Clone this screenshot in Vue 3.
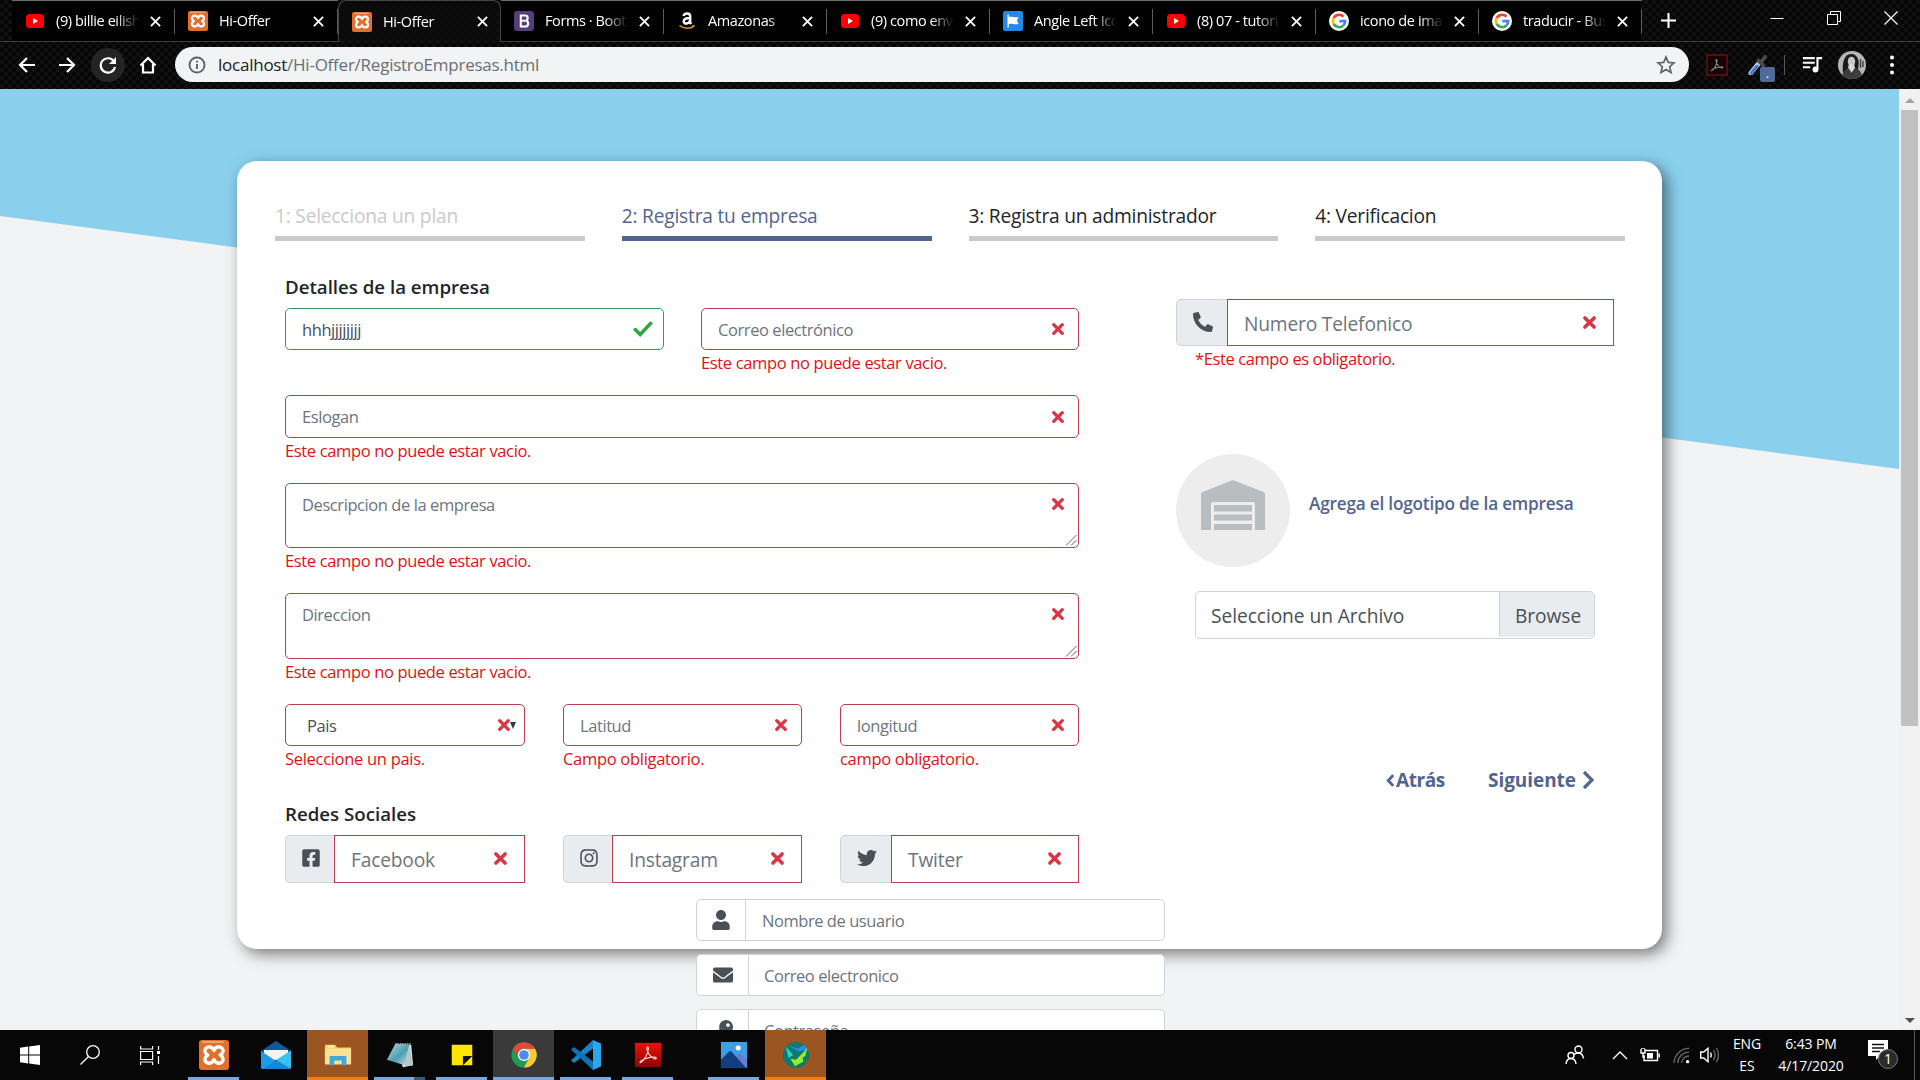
<script setup>
const tabs = [
  { icon: 'youtube', title: '(9) billie eilish' },
  { icon: 'xampp', title: 'Hi-Offer' },
  { icon: 'xampp', title: 'Hi-Offer', active: true },
  { icon: 'bootstrap', title: 'Forms · Bootstrap' },
  { icon: 'amazon', title: 'Amazonas' },
  { icon: 'youtube', title: '(9) como enviar' },
  { icon: 'flag', title: 'Angle Left Icon' },
  { icon: 'youtube', title: '(8) 07 - tutorial' },
  { icon: 'google', title: 'icono de imagen' },
  { icon: 'google', title: 'traducir - Buscar' },
]

const steps = [
  { label: '1: Selecciona un plan', state: 'done' },
  { label: '2: Registra tu empresa', state: 'current' },
  { label: '3: Registra un administrador', state: '' },
  { label: '4: Verificacion', state: '' },
]

const location = [
  { label: 'Pais', error: 'Seleccione un pais.', select: true },
  { label: 'Latitud', error: 'Campo obligatorio.' },
  { label: 'longitud', error: 'campo obligatorio.' },
]

const socials = [
  { icon: 'facebook', label: 'Facebook' },
  { icon: 'instagram', label: 'Instagram' },
  { icon: 'twitter', label: 'Twiter' },
]

const account = [
  { icon: 'user', label: 'Nombre de usuario' },
  { icon: 'envelope', label: 'Correo electronico' },
  { icon: 'key', label: 'Contraseña' },
]

const apps = [
  { icon: 'xampp', cls: 'running first' },
  { icon: 'mail', cls: '' },
  { icon: 'explorer', cls: 'alert' },
  { icon: 'notepad', cls: 'running stacked' },
  { icon: 'sticky', cls: 'running' },
  { icon: 'chrome', cls: 'focused' },
  { icon: 'vscode', cls: 'running' },
  { icon: 'acrobat', cls: 'running' },
  { icon: 'photos', cls: 'running spaced' },
  { icon: 'maps', cls: 'alert' },
]
</script>

<template>
  <div class="screen">
    <svg class="defs" aria-hidden="true">
      <linearGradient id="acroRed" x1="0" y1="0" x2="0" y2="1">
        <stop offset="0" stop-color="#ee1108" />
        <stop offset="1" stop-color="#8d0505" />
      </linearGradient>
      <linearGradient id="noteGlass" x1="0" y1="0" x2="1" y2="1">
        <stop offset="0" stop-color="#b5dce4" />
        <stop offset=".55" stop-color="#4d9fb0" />
        <stop offset="1" stop-color="#c9e0e4" />
      </linearGradient>
      <symbol id="youtube" viewBox="0 0 20 20" preserveAspectRatio="none">
        <rect x="1" y="3" width="18" height="14" rx="3.500" fill="#f00" />
        <path d="M8 7l5 3-5 3z" fill="#fff" />
      </symbol>
      <symbol id="xampp" viewBox="0 0 30 30">
        <rect width="30" height="30" rx="3" fill="#e2702b" />
        <rect x="3" y="1" width="22" height="2" rx="1" fill="#f6b98c" opacity=".7" />
        <path d="M15 10.500C13.500 6.500 9 6 7 8.200 5 10.500 6 13.500 8.800 15 6 16.500 5 20 7 22c2.200 2.200 6.700 1.300 8-2.500 1.300 3.800 5.800 4.700 8 2.500 2-2 1-5.500-1.800-7C24 13.500 25 10.500 23 8.200 21 6 16.500 6.500 15 10.500z" fill="none" stroke="#fff" stroke-width="3.400" stroke-linejoin="round" />
      </symbol>
      <symbol id="bootstrap" viewBox="0 0 20 20">
        <rect width="20" height="20" rx="3" fill="#563d7c" />
        <path d="M6.800 4.500h4.300c3.200 0 3.400 4.300.6 5.200 3.500.6 3.300 5.800-.6 5.800H6.800zM6.800 9.700h4.400" fill="none" stroke="#fff" stroke-width="2.100" />
      </symbol>
      <symbol id="amazon" viewBox="0 0 20 20">
        <path d="M6.500 5C7.500 1.600 13.200 1.600 13.200 5.300V11.500l1 1.500M13 7C9 7 6.600 8 6.700 10.500c.2 3 5.300 2.700 6.300-1" fill="none" stroke="#fff" stroke-width="2.400" />
        <path d="M2.500 14.500c4.500 3.700 10.500 3.700 14.500.6" fill="none" stroke="#e59520" stroke-width="1.500" />
        <path d="M14.800 14.200l3-.2-.9 2.600z" fill="#e59520" />
      </symbol>
      <symbol id="flag" viewBox="0 0 20 20">
        <rect width="20" height="20" rx="2" fill="#228ae6" />
        <path d="M4.500 3.500h1.300V6c3-1.200 5 1 9.800 0l-1.700 3.500L15.600 13c-4.500 1-7-1.200-9.800 0v3.500H4.500z" fill="#fff" />
      </symbol>
      <symbol id="google" viewBox="0 0 20 20">
        <circle cx="10" cy="10" r="10" fill="#fff" />
        <g fill="none" stroke-width="2.600">
          <path d="M14.600 5.700A6.200 6.200 0 0 0 4.700 7" stroke="#ea4335" />
          <path d="M4.700 7a6.200 6.200 0 0 0 0 6" stroke="#fbbc05" />
          <path d="M4.700 13a6.200 6.200 0 0 0 9.500 1.600" stroke="#34a853" />
          <path d="M14.200 14.600A6 6 0 0 0 16.200 10.100H10.300" stroke="#4285f4" />
        </g>
      </symbol>
      <symbol id="cross" viewBox="0 0 14 14">
        <path d="M2.700 2.700l8.600 8.600M11.300 2.700l-8.600 8.600" stroke="#d93546" stroke-width="3.300" stroke-linecap="round" />
      </symbol>
      <symbol id="phone" viewBox="0 0 512 512"><path d="M497.390 361.800l-112-48a24 24 0 0 0-28 6.900l-49.600 60.600A370.660 370.660 0 0 1 130.600 204.110l60.600-49.600a23.940 23.940 0 0 0 6.900-28l-48-112A24.160 24.160 0 0 0 122.600.61l-104 24A24 24 0 0 0 0 48c0 256.500 207.900 464 464 464a24 24 0 0 0 23.400-18.600l24-104a24.290 24.290 0 0 0-14.010-27.600z" /></symbol>
      <symbol id="facebook" viewBox="0 0 448 512"><path d="M400 32H48A48 48 0 0 0 0 80v352a48 48 0 0 0 48 48h137.250V327.690h-63V256h63v-54.640c0-62.150 37-96.480 93.670-96.480 27.140 0 55.520 4.840 55.520 4.840v61h-31.270c-30.810 0-40.420 19.120-40.420 38.730V256h68.780l-11 71.690h-57.780V480H400a48 48 0 0 0 48-48V80a48 48 0 0 0-48-48z" /></symbol>
      <symbol id="instagram" viewBox="0 0 448 512"><path d="M224.100 141c-63.600 0-114.900 51.300-114.900 114.900s51.300 114.900 114.900 114.900S339 319.500 339 255.900 287.700 141 224.100 141zm0 189.600c-41.100 0-74.700-33.500-74.700-74.700s33.500-74.700 74.700-74.700 74.700 33.500 74.700 74.700-33.600 74.700-74.700 74.700zm146.400-194.300c0 14.900-12 26.800-26.800 26.800-14.900 0-26.800-12-26.800-26.800s12-26.800 26.800-26.800 26.800 12 26.800 26.800zm76.100 27.200c-1.700-35.900-9.900-67.700-36.200-93.900-26.200-26.200-58-34.400-93.900-36.200-37-2.100-147.900-2.100-184.900 0-35.800 1.700-67.600 9.900-93.900 36.100s-34.400 58-36.200 93.900c-2.100 37-2.100 147.900 0 184.900 1.700 35.900 9.900 67.700 36.200 93.900s58 34.400 93.900 36.200c37 2.100 147.900 2.100 184.900 0 35.900-1.700 67.700-9.900 93.900-36.200 26.200-26.200 34.400-58 36.200-93.900 2.100-37 2.100-147.800 0-184.800zM398.800 388c-7.800 19.600-22.900 34.700-42.600 42.600-29.500 11.700-99.500 9-132.100 9s-102.700 2.600-132.100-9c-19.600-7.800-34.700-22.900-42.600-42.600-11.700-29.500-9-99.500-9-132.100s-2.600-102.700 9-132.100c7.800-19.600 22.900-34.700 42.600-42.600 29.500-11.700 99.500-9 132.100-9s102.700-2.600 132.100 9c19.600 7.800 34.700 22.900 42.600 42.600 11.700 29.500 9 99.500 9 132.100s2.700 102.700-9 132.100z" /></symbol>
      <symbol id="twitter" viewBox="0 0 512 512"><path d="M459.370 151.716c.325 4.548.325 9.097.325 13.645 0 138.720-105.583 298.558-298.558 298.558-59.452 0-114.680-17.219-161.137-47.106 8.447.974 16.568 1.299 25.340 1.299 49.055 0 94.213-16.568 130.274-44.832-46.132-.975-84.792-31.188-98.112-72.772 6.498.974 12.995 1.624 19.818 1.624 9.421 0 18.843-1.300 27.614-3.573-48.081-9.747-84.143-51.980-84.143-102.985v-1.299c13.969 7.797 30.214 12.670 47.431 13.319-28.264-18.843-46.781-51.005-46.781-87.391 0-19.492 5.197-37.360 14.294-52.954 51.655 63.675 129.300 105.258 216.365 109.807-1.624-7.797-2.599-15.918-2.599-24.040 0-57.828 46.782-104.934 104.934-104.934 30.213 0 57.502 12.670 76.670 33.137 23.715-4.548 46.456-13.320 66.599-25.340-7.798 24.366-24.366 44.833-46.132 57.827 21.117-2.273 41.584-8.122 60.426-16.243-14.292 20.791-32.161 39.308-52.628 54.253z" /></symbol>
      <symbol id="user" viewBox="0 0 448 512"><path d="M224 256c70.700 0 128-57.300 128-128S294.700 0 224 0 96 57.300 96 128s57.300 128 128 128zm89.600 32h-16.700c-22.200 10.200-46.900 16-72.900 16s-50.600-5.800-72.900-16h-16.700C60.200 288 0 348.200 0 422.400V464c0 26.500 21.500 48 48 48h352c26.500 0 48-21.500 48-48v-41.600c0-74.200-60.200-134.400-134.400-134.400z" /></symbol>
      <symbol id="envelope" viewBox="0 0 512 512"><path d="M502.300 190.800c3.900-3.100 9.700-.2 9.700 4.700V400c0 26.500-21.500 48-48 48H48c-26.500 0-48-21.500-48-48V195.600c0-5 5.700-7.800 9.700-4.700 22.400 17.400 52.100 39.500 154.100 113.600 21.100 15.400 56.700 47.800 92.200 47.600 35.700.3 72-32.800 92.300-47.600 102-74.100 131.600-96.300 154-113.700zM256 320c23.200.4 56.600-29.200 73.400-41.400 132.700-96.300 142.800-104.700 173.400-128.700 5.800-4.500 9.200-11.500 9.200-18.900v-19c0-26.500-21.500-48-48-48H48c-26.500 0-48 21.500-48 48v19c0 7.400 3.400 14.300 9.200 18.900 30.600 23.900 40.700 32.400 173.400 128.700 16.800 12.200 50.200 41.800 73.400 41.400z" /></symbol>
      <symbol id="key" viewBox="0 0 512 512"><path d="M512 176.001C512 273.203 433.202 352 336 352c-11.220 0-22.190-1.062-32.827-3.069l-24.012 27.014A23.999 23.999 0 0 1 261.223 384H224v40c0 13.255-10.745 24-24 24h-40v40c0 13.255-10.745 24-24 24H24c-13.255 0-24-10.745-24-24v-78.059c0-6.365 2.529-12.470 7.029-16.971l161.802-161.802C163.108 213.814 160 195.271 160 176 160 78.798 238.797.001 335.999 0 433.488-.001 512 78.511 512 176.001zM336 128c0 26.510 21.490 48 48 48s48-21.490 48-48-21.490-48-48-48-48 21.490-48 48z" /></symbol>

      <symbol id="mail" viewBox="0 0 30 30">
        <path d="M0 11L15 1l15 10v5H0z" fill="#0d5a9e" />
        <path d="M3 10h24v10H3z" fill="#f1f3f5" />
        <path d="M0 11l15 10L30 11v16.500q0 1.500-1.500 1.500h-27Q0 29 0 27.500z" fill="#1c9bea" />
        <path d="M15 20L30 10.500V28z" fill="#39c2f2" />
        <path d="M15 20.500L29 29H1.500z" fill="#1686d8" />
      </symbol>
      <symbol id="explorer" viewBox="0 0 30 30">
        <path d="M1 4h11l2 3h15v18H1z" fill="#f7cb62" />
        <path d="M4 5h7v2H4z" fill="#fff3cc" />
        <path d="M1 8h28v17H1z" fill="#fbe195" />
        <path d="M6 26V16h18v10h-5v-5h-8v5z" fill="#41a8d9" />
      </symbol>
      <symbol id="notepad" viewBox="0 0 30 30">
        <path d="M11 3l16 1 2 22-11 2z" fill="#dfe6e6" />
        <path d="M10 3l15 1-5 22L1 20z" fill="url(#noteGlass)" />
        <path d="M25 4l4 22-9 1z" fill="#b6c7c8" />
        <path d="M10 3h17" stroke="#999" stroke-width="1.500" stroke-dasharray="1.500 1" />
      </symbol>
      <symbol id="sticky" viewBox="0 0 30 30">
        <path d="M4 4h22v12L16 26H4z" fill="#ffe600" />
        <path d="M26 16v10H16z" fill="#ffe600" />
        <path d="M26 16H16v10z" fill="#111" />
      </symbol>
      <symbol id="chrome" viewBox="0 0 30 30">
        <circle cx="15" cy="15" r="13.500" fill="#1e9b56" />
        <path d="M15 8.300h11.800A13.500 13.500 0 0 1 14.900 28.500L20.800 18z" fill="#fcc934" />
        <path d="M3.300 8.200A13.500 13.500 0 0 1 26.800 8.300H15L9.200 18.300z" fill="#dc4b3e" />
        <circle cx="15" cy="15" r="6.600" fill="#fff" />
        <circle cx="15" cy="15" r="5.200" fill="#4c8bf5" />
      </symbol>
      <symbol id="vscode" viewBox="0 0 30 30">
        <path d="M22 8.500L3 23 0 20.500 22 0z" fill="#1584cf" />
        <path d="M0 9.500L3 7l19 14.500V30z" fill="#0c72bb" />
        <path d="M22 0l8 3.500v23L22 30z" fill="#2aa5ee" />
      </symbol>
      <symbol id="acrobat" viewBox="0 0 30 30">
        <rect x="1" y="2" width="28" height="26" fill="url(#acroRed)" />
        <path d="M7 23c3-1 8-9 8.500-15 .2-2-2-2-1.700.3.500 5 5 10.500 8.700 11 2 .2 1.600-2-.5-2C17 17 8 20 6.500 22.500q-.3 1 .5.500z" fill="none" stroke="#ffdcd8" stroke-width="1.200" />
      </symbol>
      <symbol id="photos" viewBox="0 0 30 30">
        <rect x="1" y="1" width="28" height="28" fill="#3d9ee5" />
        <path d="M12 22l9-9 8 8v8H14z" fill="#6a7bd0" />
        <path d="M1 20l9-9q1-.8 2 0l16 18H1z" fill="#123f7d" />
        <circle cx="19.500" cy="7.500" r="2.700" fill="#fff" />
      </symbol>
      <symbol id="maps" viewBox="0 0 30 30">
        <circle cx="15" cy="15" r="14" fill="#0c7a70" />
        <path d="M7 5l10 3 7-4 4 6-11 1z" fill="#2590db" />
        <path d="M4 6l8 9-5 3z" fill="#36d2c5" />
        <path d="M27 7l-2 9-3 2 1 4-9 5-5-8 6 1 9-9z" fill="#9be82c" />
      </symbol>
    </svg>

    <header class="browser">
      <div class="tabstrip">
        <div v-for="(tab, i) in tabs" :key="i" class="tab" :class="{ active: tab.active }">
          <svg class="favicon"><use :href="'#' + tab.icon" /></svg>
          <span class="tab-title">{{ tab.title }}</span>
          <svg class="tab-close" viewBox="0 0 12 12"><path d="M1 1l10 10M11 1L1 11" stroke="#fff" stroke-width="2" /></svg>
        </div>
        <svg class="new-tab" viewBox="0 0 16 16"><path d="M8 0v16M0 8h16" stroke="#fff" stroke-width="2.200" /></svg>
        <div class="window-buttons">
          <svg viewBox="0 0 14 14"><path d="M.5 7.500h13" stroke="#fff" /></svg>
          <svg viewBox="0 0 14 14"><path d="M.5 3.500h10v10H.5zM3.500 3V.5h10v10H11" fill="none" stroke="#fff" /></svg>
          <svg viewBox="0 0 14 14"><path d="M.5.500l13 13M13.500.500l-13 13" stroke="#fff" stroke-width="1.200" /></svg>
        </div>
      </div>
      <div class="toolbar">
        <div class="nav">
          <svg viewBox="0 0 18 18"><path d="M17 9H2.500M9 2L2 9l7 7" /></svg>
          <svg viewBox="0 0 18 18"><path d="M1 9h14.500M9 2l7 7-7 7" /></svg>
          <span class="reload"><svg viewBox="0 0 18 18"><path d="M15 5.500A7.200 7.200 0 1 0 16 11" /><path d="M17 1v7h-7z" class="solid" /></svg></span>
          <svg viewBox="0 0 18 18"><path d="M1.500 9.500L9 2l7.500 7.500M4 8v8.500h10V8" /></svg>
        </div>
        <div class="omnibox">
          <svg class="info" viewBox="0 0 18 18"><circle cx="9" cy="9" r="7.500" /><path d="M9 8v5M9 4.800v1.800" /></svg>
          <span class="url"><b>localhost</b>/Hi-Offer/RegistroEmpresas.html</span>
          <svg class="star" viewBox="0 0 20 20"><path d="M10 2l2.300 5.400 5.700.5-4.300 3.800 1.300 5.700-5-3-5 3 1.300-5.700L2 7.900l5.700-.5z" /></svg>
        </div>
        <div class="extensions">
          <svg class="pdf" viewBox="0 0 22 22"><rect x="1" y="1" width="20" height="20" fill="#140404" stroke="#6a0f0b" stroke-width="1.500" /><path d="M5.500 16.500c3-1 5.500-6 5.500-10 0-1.500-1.500-1.500-1 .5.700 3.500 3.500 6.800 6 7 1.500 0 1-1.200-.5-1.100-3.500 0-9 2-10 3.600z" fill="none" stroke="#888" stroke-width="1.100" /></svg>
          <div class="dropper">
            <svg viewBox="0 0 22 22"><path d="M3 20l9-11" stroke="#b9cdf3" stroke-width="5" stroke-linecap="round" /><path d="M3.500 20l6-7" stroke="#4c78c4" stroke-width="3.500" stroke-linecap="round" /><path d="M11 7l5 5M14 8l4-5" stroke="#4a4a4a" stroke-width="4" stroke-linecap="round" /></svg>
            <span class="ext-badge">.</span>
          </div>
          <span class="rule"></span>
          <svg class="queue" viewBox="0 0 22 20"><path d="M1 3h13M1 8h13M1 13h8" stroke="#fff" stroke-width="2.300" /><path d="M17 15V3h5" fill="none" stroke="#fff" stroke-width="2.300" /><circle cx="14.800" cy="15.500" r="3.200" fill="#fff" /></svg>
          <svg class="avatar" viewBox="0 0 28 28"><circle cx="14" cy="14" r="14" fill="#b5b5b5" /><path d="M5 22C4 12 6 3 13 3s9 7 7 15l2 4z" fill="#1b1b1b" /><ellipse cx="13.500" cy="10.500" rx="3.700" ry="4.800" fill="#c8c8c8" /><path d="M11 13h5l1 4-3.500 5L10 17z" fill="#d8d8d8" /><path d="M4.200 24q2-5 6-7l3.500 5 4-5q5 2 6 7a14 14 0 0 1-19.500 0z" fill="#3d3d3d" /><path d="M22.500 8v9M25 10v6" stroke="#444" stroke-width="1.500" /></svg>
          <svg class="dots" viewBox="0 0 4 20"><circle cx="2" cy="2.500" r="2" /><circle cx="2" cy="10" r="2" /><circle cx="2" cy="17.500" r="2" /></svg>
        </div>
      </div>
    </header>

    <div class="viewport">
      <main class="page">
        <div class="sky"></div>
        <section class="card">
          <div class="steps">
            <div v-for="s in steps" :key="s.label" class="step" :class="s.state">{{ s.label }}</div>
          </div>
          <div class="form">
            <div class="left">
              <h5>Detalles de la empresa</h5>
              <div class="row two">
                <div class="field">
                  <div class="input valid"><span class="value">hhhjjjjjjjj</span>
                    <svg class="check" viewBox="0 0 20 16"><path d="M2.200 8.500l5 5L17.800 2.200" fill="none" stroke="#28a745" stroke-width="3.400" stroke-linecap="round" /></svg>
                  </div>
                </div>
                <div class="field">
                  <div class="input"><span>Correo electrónico</span><svg class="cross"><use href="#cross" /></svg></div>
                  <p class="error">Este campo no puede estar vacio.</p>
                </div>
              </div>
              <div class="field">
                <div class="input tall"><span>Eslogan</span><svg class="cross"><use href="#cross" /></svg></div>
                <p class="error">Este campo no puede estar vacio.</p>
              </div>
              <div v-for="(label, i) in ['Descripcion de la empresa', 'Direccion']" :key="label" class="field">
                <div class="input area" :class="{ lower: i }">
                  <span>{{ label }}</span><svg class="cross"><use href="#cross" /></svg>
                  <svg class="grip" viewBox="0 0 12 12"><path d="M1 11.500L11.500 1M6 11.500L11.500 6" stroke="#666" stroke-width="1" /></svg>
                </div>
                <p class="error">Este campo no puede estar vacio.</p>
              </div>
              <div class="row three">
                <div v-for="f in location" :key="f.label" class="field">
                  <div class="input" :class="{ select: f.select }">
                    <span>{{ f.label }}</span><svg class="cross"><use href="#cross" /></svg>
                    <i v-if="f.select" class="caret"></i>
                  </div>
                  <p class="error short">{{ f.error }}</p>
                </div>
              </div>
              <h5 class="social-title">Redes Sociales</h5>
              <div class="row three">
                <div v-for="s in socials" :key="s.icon" class="group">
                  <div class="addon" :class="s.icon"><svg><use :href="'#' + s.icon" /></svg></div>
                  <div class="group-input"><span>{{ s.label }}</span><svg class="cross"><use href="#cross" /></svg></div>
                </div>
              </div>
            </div>
            <div class="right">
              <div class="group phone-group">
                <div class="addon phone"><svg><use href="#phone" /></svg></div>
                <div class="group-input"><span>Numero Telefonico</span><svg class="cross"><use href="#cross" /></svg></div>
              </div>
              <p class="error phone-error">*Este campo es obligatorio.</p>
              <div class="logo-row">
                <div class="logo-circle">
                  <svg viewBox="0 0 64 50"><path d="M0 50V14q0-1.500 1.500-2L32 0l30.500 12Q64 12.500 64 14v36H54V24q0-2-2-2H12q-2 0-2 2v26z" /><path d="M13 25h38v6.500H13zM13 34.500h38v6H13zM13 44h38v6H13z" /></svg>
                </div>
                <span class="logo-text">Agrega el logotipo de la empresa</span>
              </div>
              <div class="file">
                <span class="file-name">Seleccione un Archivo</span>
                <span class="file-browse">Browse</span>
              </div>
              <div class="pager">
                <a><svg class="back" viewBox="0 0 10 16"><path d="M8 2L2.500 8 8 14" /></svg>Atrás</a>
                <a>Siguiente<svg class="next" viewBox="0 0 12 20"><path d="M2 2l8 8-8 8" /></svg></a>
              </div>
            </div>
          </div>
        </section>
        <div class="account">
          <div v-for="a in account" :key="a.icon" class="account-input">
            <div class="account-addon" :class="a.icon"><svg><use :href="'#' + a.icon" /></svg></div>
            <span>{{ a.label }}</span>
          </div>
        </div>
      </main>
      <div class="scrollbar">
        <i class="arrow up"></i>
        <i class="thumb"></i>
        <i class="arrow down"></i>
      </div>
    </div>

    <footer class="taskbar">
      <div class="sys">
        <svg viewBox="0 0 20 20" fill="#fff"><path d="M0 2.800l8.200-1.200v8H0zM9.200 1.500L20 0v9.600H9.200zM0 10.500h8.200v8L0 17.300zM9.200 10.500H20V20L9.200 18.600z" /></svg>
        <svg viewBox="0 0 20 20" fill="none" stroke="#fff" stroke-width="1.300"><circle cx="13" cy="7" r="6.300" /><path d="M8.500 11.500L.5 19.500" /></svg>
        <svg viewBox="0 0 20 20" fill="none" stroke="#fff" stroke-width="1.200"><path d="M.6 1v3h12V1M.6 6.500h12v8H.6zM.6 20v-3h12v3M18.500 1v4M18.500 11v8" /><path d="M17 6h3v3h-3z" fill="#fff" stroke="none" /></svg>
      </div>
      <div class="apps">
        <div v-for="(a, i) in apps" :key="i" class="app" :class="a.cls">
          <svg :class="{ big: ['xampp', 'mail', 'vscode'].includes(a.icon) }"><use :href="'#' + a.icon" /></svg>
        </div>
      </div>
      <div class="tray">
        <svg class="people" viewBox="0 0 20 20"><circle cx="13.500" cy="4.500" r="3.500" /><circle cx="6" cy="10.500" r="3" /><path d="M1 19q.5-5.500 5-5.500t5 5.500M9 9.500q2-1.700 4.500-1.500 4.500.5 5 5.500" /></svg>
        <svg class="up" viewBox="0 0 16 10"><path d="M1 9l7-7 7 7" /></svg>
        <svg class="battery" viewBox="0 0 20 14"><path d="M5 2.500h12.500v10H4V7M19.200 5.500v4" /><path d="M7 5h6v5.500H7z" fill="#fff" stroke="none" /><path d="M1 1v4h4V1M3 5v4h2M2 0v1M4 0v1" /></svg>
        <svg class="wifi" viewBox="0 0 18 18"><path d="M1 17A16 16 0 0 1 17 1.500M5 17A12 12 0 0 1 17 5.500M9 17a8 8 0 0 1 8-7.500" stroke="#666" /><circle cx="15.500" cy="15.500" r="1.800" fill="#fff" stroke="none" /></svg>
        <svg class="sound" viewBox="0 0 20 16"><path d="M.7 5h3L8 1.300v13.400L3.700 11h-3zM10.500 5.500q1.500 2.500 0 5" /><path d="M13.500 3q3 5 0 10M16.500 1q4 7 0 14" stroke="#666" /></svg>
        <div class="lang"><span>ENG</span><span>ES</span></div>
        <div class="clock"><span>6:43 PM</span><span>4/17/2020</span></div>
        <div class="notif">
          <svg viewBox="0 0 20 20"><path d="M0 0h20v16h-8l-4 4v-4H0z" fill="#fff" /><path d="M4 4.500h12M4 8h12M4 11.500h8" stroke="#111" stroke-width="1.300" /></svg>
          <b>1</b>
        </div>
        <span class="peek"></span>
      </div>
    </footer>
  </div>
</template>

<style>
body { margin: 0; overflow: hidden; }
</style>

<style scoped>
* { box-sizing: border-box; }
p, h5 { margin: 0; }
svg { display: block; flex: none; }
.screen { width: 1920px; height: 1080px; display: flex; flex-direction: column; overflow: hidden; font-family: "Open Sans", "Noto Sans", sans-serif; background: #f2f3f5; }
.defs { position: absolute; width: 0; height: 0; }

/* Browser chrome */
.browser { height: 89px; flex: none; background-color: #050505; background-image: repeating-conic-gradient(#101010 0 25%, #060606 0 50%); background-size: 8px 8px; }
.tabstrip { height: 42px; display: flex; align-items: center; padding-left: 12px; border-bottom: 1px solid #3f3f3f; }
.tab { position: relative; width: 163px; height: 41px; display: flex; align-items: center; padding-left: 13px; background: #020202; border-top: 1px solid #6d6d6d; color: #fff; }
.tab::after { content: ""; position: absolute; right: 0; top: 8px; width: 1px; height: 25px; background: #5c5c5c; }
.tab.active { height: 42px; margin-bottom: -1px; background: #0b0b0bcc; border: 1px solid #444; border-bottom: 0; border-radius: 8px 8px 0 0; padding-left: 13px; }
.tab.active::after { display: none; }
.favicon { width: 20px; height: 20px; }
.tab-title { width: 83px; margin: 0 9px 0 11px; overflow: hidden; white-space: nowrap; font-size: 14.500px; letter-spacing: -.4px; line-height: 24px; -webkit-mask-image: linear-gradient(90deg, #000 72%, transparent); mask-image: linear-gradient(90deg, #000 72%, transparent); }
.tab-close { width: 11px; height: 11px; margin-left: 2px; }
.new-tab { width: 15px; height: 15px; margin-left: 19px; }
.window-buttons { display: flex; gap: 43px; margin: -6px 22px 0 auto; }
.window-buttons svg { width: 14px; height: 14px; }
.toolbar { height: 47px; display: flex; align-items: center; padding-bottom: 2px; }
.nav { width: 175px; display: flex; align-items: center; padding-left: 18px; }
.nav svg { width: 18px; height: 18px; fill: none; stroke: #fff; stroke-width: 2.200; }
.nav > svg + svg { margin-left: 22px; }
.reload { width: 34px; height: 34px; margin: 0 14px 0 15px; border-radius: 50%; background: #242424; display: grid; place-items: center; }
.nav .solid { fill: #fff; stroke: none; }
.omnibox { width: 1514px; height: 35px; border-radius: 18px; background: #f1f3f5; display: flex; align-items: center; padding: 0 13px 0 13px; }
.info { width: 18px; height: 18px; fill: none; stroke: #5f6368; stroke-width: 1.900; }
.url { flex: 1; margin-left: 12px; font-size: 17px; color: #6b6e72; letter-spacing: -.24px; line-height: 24px; }
.url b { font-weight: 400; color: #202124; }
.star { width: 20px; height: 20px; fill: none; stroke: #5f6368; stroke-width: 1.700; }
.extensions { flex: 1; display: flex; align-items: center; padding-left: 17px; }
.pdf { width: 22px; height: 22px; }
.dropper { position: relative; width: 28px; margin-left: 20px; height: 22px; }
.dropper > svg { width: 21px; height: 21px; }
.ext-badge { position: absolute; left: 12px; top: 13px; width: 15px; height: 15px; border-radius: 2px; background: #506a99; color: #fff; font-size: 13px; line-height: 13px; text-align: center; }
.rule { width: 1px; height: 20px; margin-left: 8px; background: #555; }
.queue { width: 20px; height: 19px; margin-left: 17px; }
.avatar { width: 28px; height: 28px; margin-left: 16px; }
.dots { width: 4px; height: 20px; margin-left: 24px; fill: #fff; }

/* Page */
.viewport { height: 941px; flex: none; display: flex; }
.page { position: relative; width: 1899px; padding: 72px 0 0 237px; overflow: hidden; background: #f2f3f5; }
.sky { position: absolute; inset: 0 0 auto 0; height: 380px; background: #8ad0ed; clip-path: polygon(0 0, 100% 0, 100% 100%, 0 127px); }
.card { position: relative; width: 1425px; height: 788px; padding: 39px 38px 0 38px; border-radius: 20px; background: #fff; box-shadow: 5px 5px 15px rgba(0, 0, 0, .5); }
.steps { display: flex; gap: 37px; width: 1350px; }
.step { flex: 1; height: 41px; border-bottom: 5px solid #cacaca; font-size: 19.200px; letter-spacing: -.22px; line-height: 31px; color: #212529; }
.step.done { color: #cacaca; }
.step.current { color: #52658f; border-color: #52658f; }
.form { display: flex; padding-left: 10px; }
.left { width: 794px; margin-right: 97px; padding-top: 31px; }
h5 { font-size: 18.700px; font-weight: 600; letter-spacing: -.01px; line-height: 30px; margin-bottom: 6px; color: #212529; }
.row { display: grid; }
.two { grid-template-columns: 379px 378px; column-gap: 37px; }
.three { grid-template-columns: 240px 239px 239px; column-gap: 38px; }
.input { position: relative; display: flex; align-items: center; justify-content: space-between; height: 42px; padding: 0 13px 0 16px; border: 1px solid #c23a4d; border-radius: 5px; font-size: 16.500px; letter-spacing: -.42px; color: #6c757d; }
.input.valid { border-color: #2f9d55; padding-right: 10px; }
.input.tall { height: 43px; }
.value { color: #495057; }
.check { width: 20px; height: 16px; }
.cross { width: 14px; height: 14px; }
.area { height: 65px; align-items: flex-start; padding-top: 9px; }
.area.lower { height: 66px; }
.area .cross { margin-top: 4px; }
.grip { position: absolute; right: 1px; bottom: 1px; width: 12px; height: 12px; }
.input.select { padding: 0 13px 0 21px; color: #495057; }
.caret { position: absolute; right: 8px; top: 17px; border: solid transparent; border-width: 7px 3.500px 0; border-top-color: #343a40; }
.error { margin-top: 1px; margin-bottom: 20px; font-size: 16.500px; letter-spacing: -.36px; line-height: 24px; color: #dc1414; }
.error.short { letter-spacing: -.3px; }
.social-title { margin-top: 8px; }
.group { display: flex; height: 48px; }
.addon { width: 49px; display: grid; place-items: center; border: 1px solid #ced4da; border-right: 0; border-radius: 5px 0 0 5px; background: #e9ecef; padding: 0 0 2px 1px; }
.addon.twitter { width: 51px; }
.addon.phone { width: 51px; }
.addon svg { width: 18px; height: 20px; fill: #495057; }
.addon.twitter svg, .addon.phone svg { width: 20px; }
.group-input { flex: 1; display: flex; align-items: center; justify-content: space-between; border: 1px solid #c23a4d; padding: 0 16px 0 16px; font-size: 19.200px; letter-spacing: -.18px; color: #6c757d; }
.group-input .cross { width: 15px; height: 15px; margin-top: -1px; }
.right { width: 438px; padding-top: 58px; }
.phone-group { height: 47px; }
.phone-group .group-input span { padding-top: 1px; }
.phone-error { margin: 1px 0 0 19px; letter-spacing: -.4px; }
.logo-row { display: flex; align-items: center; margin-top: 83px; }
.logo-circle { width: 114px; height: 113px; border-radius: 50%; background: #ededed; display: grid; place-items: center; padding-bottom: 11px; }
.logo-circle svg { width: 64px; height: 50px; fill: #b8bdc1; }
.logo-text { margin: -14px 0 0 19px; font-size: 17.200px; font-weight: 600; letter-spacing: -.2px; color: #52658f; white-space: nowrap; }
.file { display: flex; width: 400px; height: 48px; margin: 24px 0 0 19px; border: 1px solid #ced4da; border-radius: 5px; font-size: 19.200px; letter-spacing: -.07px; line-height: 48px; color: #495057; overflow: hidden; }
.file-name { flex: 1; padding-left: 15px; }
.file-browse { width: 95px; height: 45px; padding-left: 15px; border-left: 1px solid #ced4da; background: #e9ecef; }
.pager { display: flex; justify-content: space-between; width: 208px; margin: 126px 0 0 210px; color: #52658f; font-size: 19px; font-weight: 700; letter-spacing: -.05px; line-height: 30px; }
.pager a { display: flex; align-items: center; }
.pager a:first-child { letter-spacing: -.4px; }
.pager svg { fill: none; stroke: #52658f; stroke-width: 3.200; }
.back { width: 9px; height: 15px; margin-right: 1px; }
.next { width: 12px; height: 20px; margin-left: 6px; margin-top: -1px; }

/* Account inputs that overlap the bottom edge of the card */
.account { position: absolute; left: 696px; top: 810px; width: 469px; display: flex; flex-direction: column; gap: 13px; }
.account-input { display: flex; align-items: center; height: 42px; border: 1px solid #ced4da; border-radius: 5px; background: #fff; font-size: 16.500px; letter-spacing: -.45px; color: #6c757d; }
.account-addon { width: 49px; height: 40px; display: grid; place-items: center; border-right: 1px solid #ced4da; margin-right: 16px; }
.account-addon.envelope, .account-addon.key { width: 52px; margin-right: 15px; }
.account-addon svg { width: 20px; height: 20px; fill: #495057; }

.scrollbar { width: 21px; display: flex; flex-direction: column; align-items: center; background: #f1f1f1; }
.arrow { border: solid transparent; }
.arrow.up { margin-top: 9px; border-width: 0 5px 5px; border-bottom-color: #a3a3a3; }
.thumb { width: 17px; height: 616px; margin-top: 7px; background: #c1c1c1; }
.arrow.down { margin: auto 0 7px; border-width: 5px 5px 0; border-top-color: #505050; }

/* Taskbar */
.taskbar { height: 50px; flex: none; display: flex; background: #070707; }
.sys { display: flex; align-items: center; gap: 40px; padding-left: 20px; width: 188px; }
.sys svg { width: 20px; height: 20px; }
.apps { display: flex; }
.app { width: 51px; margin: 0 5.500px; display: grid; place-items: center; }
.app.first { margin-left: 0; }
.app svg { width: 28px; height: 28px; }
.app svg.big { width: 30px; height: 30px; }
.running { border-bottom: 3px solid #76a9dc; padding-top: 3px; }
.stacked { border-image: linear-gradient(90deg, #76a9dc 78%, #3c5a78 78%) 1; border-width: 0 0 3px; }
.spaced { margin-left: 29.500px; }
.alert, .focused { width: 61px; margin: 0 .5px; padding-top: 3px; }
.alert { background: #9b5520; border-bottom: 3px solid #f47a12; }
.focused { background: #3a3a3a; border-bottom: 3px solid #76a9dc; }
.tray { position: relative; margin-left: auto; display: flex; align-items: center; color: #fff; }
.tray > svg { fill: none; stroke: #fff; stroke-width: 1.400; }
.people { width: 20px; height: 20px; }
.tray > .up { width: 16px; height: 10px; margin: 0 0 0 27px; }
.battery { width: 20px; height: 14px; margin-left: 12px; }
.wifi { width: 17px; height: 17px; margin-left: 13px; }
.sound { width: 20px; height: 16px; margin-left: 10px; }
.lang, .clock { display: flex; flex-direction: column; align-items: center; font-size: 14px; line-height: 22.500px; }
.lang { width: 34px; margin-left: 10px; letter-spacing: -.1px; }
.clock { width: 78px; margin-left: 8px; letter-spacing: -.1px; }
.notif { position: relative; width: 30px; height: 30px; margin-left: 18px; }
.notif svg { width: 20px; height: 20px; }
.notif b { position: absolute; left: 10px; top: 9px; width: 20px; height: 20px; border: 1px solid #777; border-radius: 50%; background: #2b2b2b; font-size: 14px; font-weight: 400; line-height: 18px; text-align: center; }
.peek { width: 1px; height: 50px; margin: 0 5px 0 16px; background: #555; }
</style>
